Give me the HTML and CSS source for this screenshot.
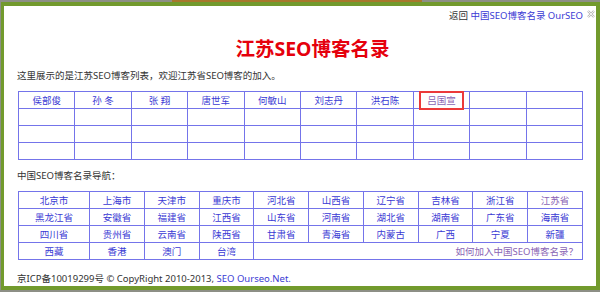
FILE: index.html
```html
<!DOCTYPE html>
<html lang="zh-CN">
<head>
    <meta charset="UTF-8">
    <title>江苏SEO博客名录</title>
    <link rel="stylesheet" href="styles.css">
</head>
<body>
    <div class="backdrop">
        <span class="bd-grey"></span>
        <span class="bd-brown"></span>
        <span class="bd-grey bd-rest"></span>
    </div>
    <div class="frame">
        <div class="head">
            <span>返回 <a href="#">中国SEO博客名录 OurSEO</a></span>
            <svg class="close" width="8" height="8" viewBox="0 0 8 8">
                <path d="M1 1 L7 7 M7 1 L1 7" stroke="#bbb" stroke-width="2.4" fill="none"/>
                <path d="M1 1 L7 7 M7 1 L1 7" stroke="#fff" stroke-width="0.8" fill="none"/>
            </svg>
        </div>

        <h1 class="title">江苏SEO博客名录</h1>

        <p class="intro">这里展示的是江苏SEO博客列表，欢迎江苏省SEO博客的加入。</p>

        <table class="grid blogs">
            <tr>
                <td><a href="#">侯部俊</a></td>
                <td><a href="#">孙 冬</a></td>
                <td><a href="#">张 翔</a></td>
                <td><a href="#">唐世军</a></td>
                <td><a href="#">何敏山</a></td>
                <td><a href="#">刘志丹</a></td>
                <td><a href="#">洪石陈</a></td>
                <td><a href="#" class="current">吕国宣</a></td>
                <td></td>
                <td></td>
            </tr>
            <tr><td></td><td></td><td></td><td></td><td></td><td></td><td></td><td></td><td></td><td></td></tr>
            <tr><td></td><td></td><td></td><td></td><td></td><td></td><td></td><td></td><td></td><td></td></tr>
            <tr><td></td><td></td><td></td><td></td><td></td><td></td><td></td><td></td><td></td><td></td></tr>
        </table>

        <p class="nav-label">中国SEO博客名录导航：</p>

        <table class="grid nav">
            <colgroup>
                <col class="col-wide">
                <col><col><col><col><col><col><col><col><col>
            </colgroup>
            <tr>
                <td><a href="#">北京市</a></td>
                <td><a href="#">上海市</a></td>
                <td><a href="#">天津市</a></td>
                <td><a href="#">重庆市</a></td>
                <td><a href="#">河北省</a></td>
                <td><a href="#">山西省</a></td>
                <td><a href="#">辽宁省</a></td>
                <td><a href="#">吉林省</a></td>
                <td><a href="#">浙江省</a></td>
                <td><a href="#" class="visited">江苏省</a></td>
            </tr>
            <tr>
                <td><a href="#">黑龙江省</a></td>
                <td><a href="#">安徽省</a></td>
                <td><a href="#">福建省</a></td>
                <td><a href="#">江西省</a></td>
                <td><a href="#">山东省</a></td>
                <td><a href="#">河南省</a></td>
                <td><a href="#">湖北省</a></td>
                <td><a href="#">湖南省</a></td>
                <td><a href="#">广东省</a></td>
                <td><a href="#">海南省</a></td>
            </tr>
            <tr>
                <td><a href="#">四川省</a></td>
                <td><a href="#">贵州省</a></td>
                <td><a href="#">云南省</a></td>
                <td><a href="#">陕西省</a></td>
                <td><a href="#">甘肃省</a></td>
                <td><a href="#">青海省</a></td>
                <td><a href="#">内蒙古</a></td>
                <td><a href="#">广西</a></td>
                <td><a href="#">宁夏</a></td>
                <td><a href="#">新疆</a></td>
            </tr>
            <tr>
                <td><a href="#">西藏</a></td>
                <td><a href="#">香港</a></td>
                <td><a href="#">澳门</a></td>
                <td><a href="#">台湾</a></td>
                <td colspan="6" class="join"><a href="#" class="visited">如何加入中国SEO博客名录？</a></td>
            </tr>
        </table>

        <p class="footer">京ICP备10019299号 © CopyRight 2010-2013, <a href="#">SEO Ourseo.Net.</a></p>
    </div>
</body>
</html>
```

FILE: styles.css
```css
* {
    box-sizing: border-box;
}
body {
    margin: 0;
    height: 292px;
    overflow: hidden;
    background-color: #8d8f86;
    font-family: 'Noto Sans', 'Noto Sans CJK SC', sans-serif;
    font-size: 9.5px;
    color: #333;
}
a {
    color: #3a3ad4;
    text-decoration: none;
}
.backdrop {
    display: flex;
    height: 2px;
}
.bd-grey {
    width: 172px;
    background-color: #8d8f86;
}
.bd-brown {
    width: 250px;
    background-color: #a7782c;
}
.bd-rest {
    flex: 1;
}
.frame {
    height: 288px;
    margin-left: 1px;
    background-color: #fff;
    border: 4px solid #729a2d;
    border-left-width: 3px;
    padding: 0 14px 0 13px;
}
.head {
    display: flex;
    justify-content: flex-end;
    align-items: flex-start;
    gap: 4px;
    margin: 2px -13px 0 0;
    line-height: 16px;
}
.close {
    margin-top: 2px;
}
.title {
    margin: 12px 0 0;
    padding-left: 26px;
    text-align: center;
    font-size: 19.5px;
    line-height: 26px;
    font-weight: bold;
    color: #e5000c;
}
.intro {
    margin: 6px 0 0;
    line-height: 16px;
}
.grid {
    width: 565px;
    margin-left: 1px;
    border-collapse: collapse;
    table-layout: fixed;
}
.grid td {
    height: 17px;
    padding: 0;
    border: 1px solid #7474ea;
    line-height: 15px;
    text-align: center;
}
.blogs {
    margin-top: 7px;
}
.current {
    display: inline-block;
    padding: 0 6px;
    margin: -2px 0;
    border: 2px solid #ec3a3a;
    line-height: 15px;
    color: #8a64b4;
}
.visited {
    color: #8a64b4;
}
.nav-label {
    margin: 8px 0 0;
    line-height: 16px;
}
.nav {
    margin-top: 7px;
}
.col-wide {
    width: 71px;
}
.grid td.join {
    text-align: right;
    padding-right: 4px;
}
.footer {
    margin: 11px 0 0;
    line-height: 16px;
}
```
